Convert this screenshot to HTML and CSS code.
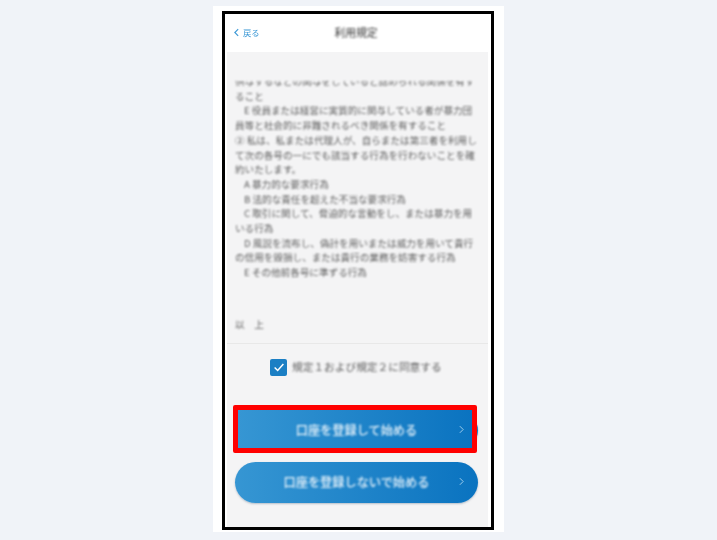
FILE: index.html
```html
<!DOCTYPE html>
<html lang="ja">
<head>
<meta charset="utf-8">
<title>利用規定</title>
<link rel="stylesheet" href="styles.css">
</head>
<body>
<div class="panel">
  <div class="frame">
    <header class="head">
      <a class="back"><svg class="back-icon" viewBox="0 0 6 10"><path d="M5 1 1 5l4 4" fill="none" stroke="#3f9ad6" stroke-width="1.4"/></svg><span>戻る</span></a>
      <h1 class="title">利用規定</h1>
    </header>
    <main class="main">
      <div class="terms">
        <div class="terms-inner">
          <p>供与するなどの関与をしていると認められる関係を有す</p>
          <p>ること</p>
          <p class="ind">E 役員または経営に実質的に関与している者が暴力団</p>
          <p>員等と社会的に非難されるべき関係を有すること</p>
          <p>② 私は、私または代理人が、自らまたは第三者を利用し</p>
          <p>て次の各号の一にでも該当する行為を行わないことを確</p>
          <p>約いたします。</p>
          <p class="ind">A 暴力的な要求行為</p>
          <p class="ind">B 法的な責任を超えた不当な要求行為</p>
          <p class="ind">C 取引に関して、脅迫的な言動をし、または暴力を用</p>
          <p>いる行為</p>
          <p class="ind">D 風説を流布し、偽計を用いまたは威力を用いて貴行</p>
          <p>の信用を毀損し、または貴行の業務を妨害する行為</p>
          <p class="ind">E その他前各号に準ずる行為</p>
          <p class="end">以　上</p>
        </div>
      </div>
      <div class="agree">
        <span class="check"><svg viewBox="0 0 16 16" class="check-icon"><path d="M3 8.5 6.5 12 13 4.5" fill="none" stroke="#fff" stroke-width="1.7"/></svg></span>
        <span class="agree-text">規定１および規定２に同意する</span>
      </div>
      <div class="actions">
        <div class="btn-wrap">
          <button class="btn btn-first"><span>口座を登録して始める</span><svg class="chev" viewBox="0 0 6 10"><path d="M1 1l4 4-4 4" fill="none" stroke="#a9d3ef" stroke-width="1.1"/></svg></button>
          <div class="highlight"></div>
        </div>
        <button class="btn btn-second"><span>口座を登録しないで始める</span><svg class="chev" viewBox="0 0 6 10"><path d="M1 1l4 4-4 4" fill="none" stroke="#a9d3ef" stroke-width="1.1"/></svg></button>
      </div>
    </main>
  </div>
</div>
</body>
</html>
```
FILE: styles.css
```css
* { box-sizing: border-box; }
html, body { margin: 0; height: 100%; }
body {
  width: 717px;
  height: 540px;
  overflow: hidden;
  background: #f0f3f8;
  font-family: "Noto Sans CJK JP", "Noto Sans", sans-serif;
  padding: 6px 213px 8px 213px;
}
.panel {
  width: 291px;
  height: 526px;
  background: #fff;
  padding: 5px 0 0 9px;
}
.frame {
  width: 272px;
  height: 519px;
  border: 3px solid #000;
  background: #fff;
  padding: 0 3px 0 2px;
  display: flex;
  flex-direction: column;
}
.head {
  height: 38px;
  flex: none;
  display: flex;
  align-items: center;
  justify-content: center;
  position: relative;
}
.back {
  position: absolute;
  left: 7px;
  top: 12px;
  display: flex;
  align-items: center;
  gap: 4px;
  font-size: 8.4px;
  line-height: 12px;
  color: #3f9ad6;
  filter: blur(0.7px);
}
.back-icon { width: 5px; height: 9px; }
.title {
  margin: 0 3px 2px 0;
  font-size: 10.8px;
  line-height: 14px;
  font-weight: 400;
  color: #333;
  filter: blur(0.8px);
}
.main {
  flex: 1;
  background: #f4f4f5;
  display: flex;
  flex-direction: column;
}
.terms {
  height: 292px;
  flex: none;
  border-bottom: 1px solid #e8e8e8;
  padding: 29px 0 0 8px;
}
.terms-inner {
  height: 253px;
  overflow: hidden;
  position: relative;
  color: #5e5e5e;
  font-size: 9.6px;
  line-height: 14.7px;
  filter: blur(0.85px);
  width: 246px;
}
.terms-inner p { margin: 0; white-space: nowrap; }
.terms-inner p:first-child { margin-top: -7px; }
.terms-inner .ind { padding-left: 9px; }
.terms-inner .end { margin-top: 37px; }
.agree {
  height: 46px;
  flex: none;
  display: flex;
  align-items: center;
  padding-left: 43px;
  gap: 5px;
}
.check {
  width: 17px;
  height: 17px;
  background: #1b7fc4;
  border-radius: 2px;
  display: flex;
  align-items: center;
  justify-content: center;
  filter: blur(0.5px);
}
.check-icon { width: 14px; height: 14px; }
.agree-text {
  font-size: 10.7px;
  line-height: 14px;
  color: #5e5e5e;
  white-space: nowrap;
  filter: blur(0.85px);
}
.actions {
  padding: 20px 0 0 8px;
  display: flex;
  flex-direction: column;
  gap: 11px;
}
.btn-wrap { position: relative; width: 243px; height: 41px; }
.btn {
  width: 243px;
  height: 41px;
  border: 0;
  border-radius: 21px;
  background: linear-gradient(90deg, #3696d3, #0a73c0);
  color: #eaf4fb;
  font-family: inherit;
  font-size: 12.2px;
  font-weight: 500;
  display: flex;
  align-items: center;
  justify-content: center;
  position: relative;
  padding: 0 0 2px;
  box-shadow: 0 1px 2px rgba(60, 90, 120, 0.35);
}
.btn-first::before {
  content: "";
  position: absolute;
  left: 3px;
  right: 6px;
  top: 0;
  bottom: 3px;
  background: linear-gradient(90deg, #3696d3, #0a73c0);
}
.btn span { filter: blur(0.8px); position: relative; }
.chev {
  position: absolute;
  right: 14px;
  top: 15px;
  width: 5px;
  height: 9px;
  filter: blur(0.5px);
}
.highlight {
  position: absolute;
  left: -2px;
  top: -5px;
  width: 244px;
  height: 48px;
  border: 5.5px solid #f00;
  border-radius: 2px;
}
```
